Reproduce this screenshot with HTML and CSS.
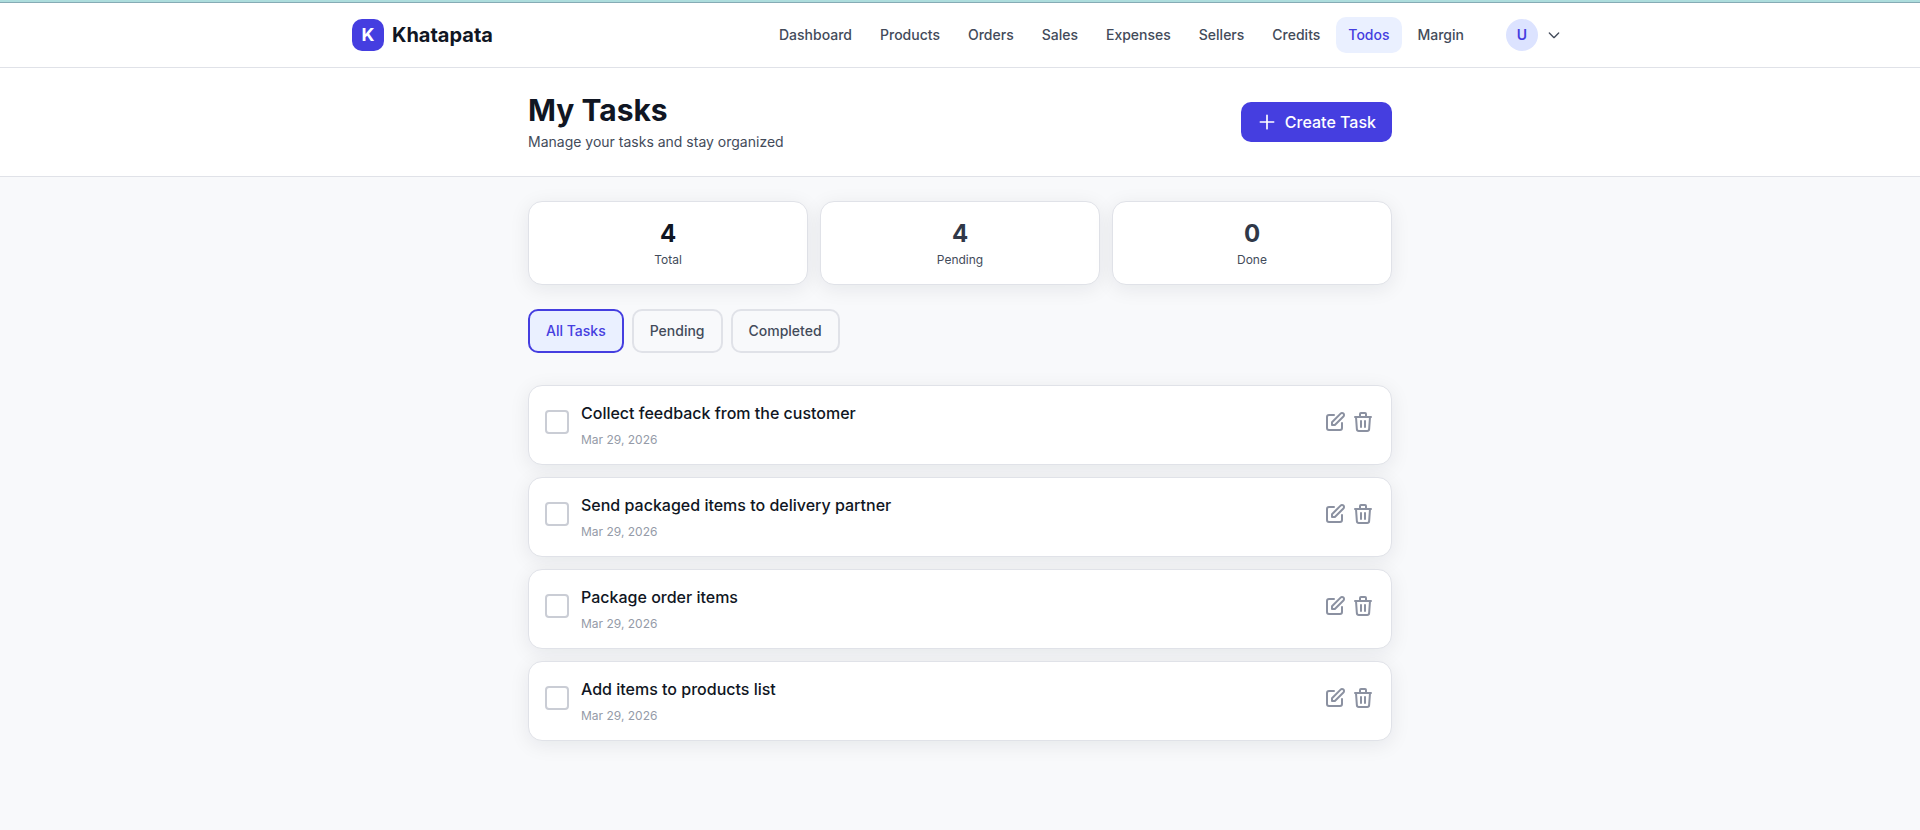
FILE: index.html
```html
<!DOCTYPE html>
<html lang="en">
<head>
<meta charset="utf-8">
<meta name="viewport" content="width=device-width, initial-scale=1">
<title>Khatapata</title>
<link rel="stylesheet" href="styles.css">
</head>
<body>
<svg class="sprite" aria-hidden="true">
  <symbol id="edit" viewBox="0 0 24 24"><path d="M11 5H6a2 2 0 00-2 2v11a2 2 0 002 2h11a2 2 0 002-2v-5m-1.414-9.414a2 2 0 112.828 2.828L11.828 15H9v-2.828l8.586-8.586z"/></symbol>
  <symbol id="trash" viewBox="0 0 24 24"><path d="M19 7l-.867 12.142A2 2 0 0116.138 21H7.862a2 2 0 01-1.995-1.858L5 7m5 4v6m4-6v6m1-10V4a1 1 0 00-1-1h-4a1 1 0 00-1 1v3M4 7h16"/></symbol>
</svg>
<header class="navbar">
  <div class="navbar-inner">
    <a class="brand" href="#"><span class="brand-mark">K</span><span>Khatapata</span></a>
    <div class="navbar-right">
      <nav class="nav">
        <a href="#">Dashboard</a>
        <a href="#">Products</a>
        <a href="#">Orders</a>
        <a href="#">Sales</a>
        <a href="#">Expenses</a>
        <a href="#">Sellers</a>
        <a href="#">Credits</a>
        <a class="active" href="#" aria-current="page">Todos</a>
        <a href="#">Margin</a>
      </nav>
      <button class="account" type="button" aria-label="Account menu">
        <span class="avatar">U</span>
        <svg class="chevron" viewBox="0 0 24 24" aria-hidden="true"><path d="M19 9l-7 7-7-7"/></svg>
      </button>
    </div>
  </div>
</header>
<section class="page-head">
  <div class="container page-head-inner">
    <div>
      <h1>My Tasks</h1>
      <p>Manage your tasks and stay organized</p>
    </div>
    <button class="create" type="button">
      <svg viewBox="0 0 24 24" aria-hidden="true"><path d="M12 4v16m8-8H4"/></svg>
      Create Task
    </button>
  </div>
</section>
<main class="container content">
  <div class="stats">
    <div class="card stat total"><strong>4</strong><span>Total</span></div>
    <div class="card stat"><strong>4</strong><span>Pending</span></div>
    <div class="card stat"><strong>0</strong><span>Done</span></div>
  </div>
  <div class="filters">
    <button class="active" type="button">All Tasks</button>
    <button type="button">Pending</button>
    <button type="button">Completed</button>
  </div>
  <ul class="tasks">
    <li class="card task">
      <input type="checkbox" id="task-1">
      <div class="task-text"><label for="task-1">Collect feedback from the customer</label><time datetime="2026-03-29">Mar 29, 2026</time></div>
      <div class="actions"><button type="button" aria-label="Edit task"><svg><use href="#edit"/></svg></button><button type="button" aria-label="Delete task"><svg><use href="#trash"/></svg></button></div>
    </li>
    <li class="card task">
      <input type="checkbox" id="task-2">
      <div class="task-text"><label for="task-2">Send packaged items to delivery partner</label><time datetime="2026-03-29">Mar 29, 2026</time></div>
      <div class="actions"><button type="button" aria-label="Edit task"><svg><use href="#edit"/></svg></button><button type="button" aria-label="Delete task"><svg><use href="#trash"/></svg></button></div>
    </li>
    <li class="card task">
      <input type="checkbox" id="task-3">
      <div class="task-text"><label for="task-3">Package order items</label><time datetime="2026-03-29">Mar 29, 2026</time></div>
      <div class="actions"><button type="button" aria-label="Edit task"><svg><use href="#edit"/></svg></button><button type="button" aria-label="Delete task"><svg><use href="#trash"/></svg></button></div>
    </li>
    <li class="card task">
      <input type="checkbox" id="task-4">
      <div class="task-text"><label for="task-4">Add items to products list</label><time datetime="2026-03-29">Mar 29, 2026</time></div>
      <div class="actions"><button type="button" aria-label="Edit task"><svg><use href="#edit"/></svg></button><button type="button" aria-label="Delete task"><svg><use href="#trash"/></svg></button></div>
    </li>
  </ul>
</main>
</body>
</html>
```
FILE: styles.css
```css
* { box-sizing: border-box; }

body {
  margin: 0;
  min-height: 100vh;
  background: #f8f9fb;
  border-top: 2px solid #addddd;
  color: #101623;
  font: 400 14px/20px Inter, sans-serif;
}

h1, p, ul { margin: 0; padding: 0; }
a { color: inherit; text-decoration: none; }
button { font: inherit; color: inherit; background: none; border: 0; padding: 0; cursor: pointer; }
svg { display: block; fill: none; stroke: currentColor; stroke-width: 2; stroke-linecap: round; stroke-linejoin: round; }
.sprite { display: none; }

.navbar {
  background: #fff;
  border-top: 1px solid #86abb5;
  border-bottom: 1px solid #e0e2e8;
}
.navbar-inner {
  max-width: 1280px;
  height: 64px;
  margin: 0 auto;
  padding: 0 32px;
  display: flex;
  align-items: center;
  justify-content: space-between;
}
.brand { display: flex; align-items: center; gap: 8px; font-size: 20px; line-height: 28px; font-weight: 700; }
.brand-mark {
  width: 32px;
  height: 32px;
  border-radius: 10px;
  background: #453ee0;
  color: #fff;
  font-size: 18px;
  line-height: 32px;
  text-align: center;
}
.navbar-right { display: flex; align-items: center; gap: 24px; }
.nav { display: flex; gap: 4px; color: #434b5a; font-weight: 500; }
.nav a { padding: 8px 12px; border-radius: 10px; }
.nav .active { background: #eaf0ff; color: #453ee0; }
.account { display: flex; align-items: center; gap: 8px; padding: 6px; color: #434b5a; }
.avatar {
  width: 32px;
  height: 32px;
  border-radius: 50%;
  background: #dce3ff;
  color: #453ee0;
  font-weight: 600;
  line-height: 32px;
}
.chevron { width: 16px; height: 16px; }

.container { max-width: 896px; margin: 0 auto; padding: 0 16px; }
.page-head { background: #fff; border-bottom: 1px solid #e0e2e8; }
.page-head-inner { display: flex; align-items: center; justify-content: space-between; padding-top: 24px; padding-bottom: 24px; }
h1 { font-size: 30px; line-height: 36px; font-weight: 700; margin-bottom: 4px; }
.page-head p { color: #434b5a; }
.create {
  display: flex;
  align-items: center;
  gap: 8px;
  padding: 8px 16px;
  border-radius: 10px;
  background: #453ee0;
  color: #fff;
  font-size: 16px;
  line-height: 24px;
  font-weight: 500;
}
.create svg { width: 20px; height: 20px; }

.content { padding-top: 24px; padding-bottom: 24px; }
.card {
  background: #fff;
  border: 1px solid #e0e2e8;
  border-radius: 14px;
  box-shadow: 0 4px 20px rgba(16, 22, 35, 0.08);
}
.stats { display: grid; grid-template-columns: repeat(3, 1fr); gap: 12px; }
.stat { display: flex; flex-direction: column; align-items: center; gap: 2px; padding: 16px; }
.stat strong { font-size: 24px; line-height: 32px; font-weight: 700; color: #303848; }
.stat.total strong { color: #101623; }
.stat span { font-size: 12px; line-height: 16px; color: #434b5a; }

.filters { display: flex; gap: 8px; margin: 24px 0 32px; }
.filters button {
  padding: 10px 16px;
  border: 2px solid #e0e2e8;
  border-radius: 10px;
  color: #434b5a;
  font-weight: 500;
}
.filters .active { background: #eaf0ff; border-color: #453ee0; color: #453ee0; }

.tasks { list-style: none; display: grid; gap: 12px; }
.task { display: flex; align-items: flex-start; gap: 12px; padding: 16px; }
.task input {
  appearance: none;
  flex: none;
  width: 24px;
  height: 24px;
  margin: 8px 0 0;
  border: 2px solid #cacdd5;
  border-radius: 4px;
}
.task input:checked { background: #453ee0; border-color: #453ee0; }
.task-text { flex: 1; display: flex; flex-direction: column; gap: 8px; }
.task-text label { font-size: 16px; line-height: 22px; font-weight: 500; }
.task-text time { font-size: 12px; line-height: 16px; color: #959ba8; }
.actions { display: flex; gap: 4px; color: #8b91a1; margin-top: 8px; }
.actions svg { width: 24px; height: 24px; }
```
